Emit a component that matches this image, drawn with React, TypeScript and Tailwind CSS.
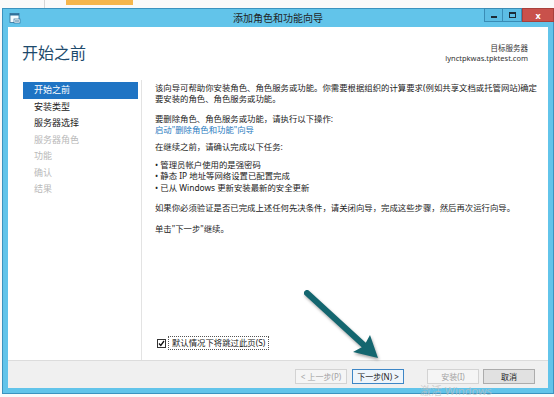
import React from "react";

const navItems = [
  { label: "开始之前", state: "active" },
  { label: "安装类型", state: "normal" },
  { label: "服务器选择", state: "normal" },
  { label: "服务器角色", state: "disabled" },
  { label: "功能", state: "disabled" },
  { label: "确认", state: "disabled" },
  { label: "结果", state: "disabled" },
];

function WindowIcon() {
  return (
    <svg width="12" height="12" viewBox="0 0 12 12">
      <rect x="1" y="1.5" width="9" height="9" fill="#f4fbff" stroke="#2f6f9a" strokeWidth="0.8" />
      <rect x="1" y="1.5" width="9" height="2" fill="#2f6f9a" />
      <rect x="5" y="7" width="6" height="4" fill="#ffffff" stroke="#2f6f9a" strokeWidth="0.7" />
      <rect x="6" y="8.5" width="4" height="1" fill="#2f6f9a" />
    </svg>
  );
}

function Arrow() {
  return (
    <svg
      className="absolute left-0 top-0 pointer-events-none"
      width="554"
      height="397"
      viewBox="0 0 554 397"
      style={{ filter: "drop-shadow(1px 2px 1.5px rgba(0,0,0,0.35))" }}
    >
      <path d="M307 293 L367 348" stroke="#14666f" strokeWidth="6" strokeLinecap="round" fill="none" />
      <path d="M378 358 L353 352 L364 346 L370 335 Z" fill="#14666f" />
    </svg>
  );
}

export default function App() {
  return (
    <div
      className="relative w-[554px] h-[397px] overflow-hidden bg-[#fafafa] text-[#1e1e1e]"
      style={{ fontFamily: "'Noto Sans', 'Noto Sans CJK SC', sans-serif" }}
    >
      {/* desktop strip behind the window */}
      <div className="flex h-[8px]">
        <div className="w-[45px] border-r border-[#d6d6d6]" />
        <div className="ml-[21px] w-[67px] h-[5px] bg-[#f6b64c]" />
      </div>

      {/* wizard window */}
      <div className="ml-[2px] w-[552px] border border-[#3b93bf] bg-[#62c4ea]">
        <div className="grid grid-cols-[1fr_auto_1fr] items-center h-[18px]">
          <div className="pl-[6px] flex items-center">
            <WindowIcon />
          </div>
          <div className="text-[10px] text-[#1f1f1f] leading-none">添加角色和功能向导</div>
          <div className="flex justify-end self-start -mt-px -mr-px">
            <div className="w-[19px] h-[14px] border border-[#3a8cb5] bg-[#5cbde4] flex items-end justify-center pb-[3px]">
              <div className="w-[6px] h-[2px] bg-[#1c2b36]" />
            </div>
            <div className="w-[19px] h-[14px] border-y border-r border-[#3a8cb5] bg-[#5cbde4] flex items-center justify-center">
              <div className="w-[7px] h-[6px] border-[1.5px] border-t-[2px] border-[#1c2b36]" />
            </div>
            <div className="w-[32px] h-[14px] bg-[#c9514b] border border-[#a8403b] flex items-center justify-center text-white text-[9px] font-bold leading-none">
              x
            </div>
          </div>
        </div>

        <div className="px-[5px] pb-[5px]">
          <div className="bg-white h-[361px] flex flex-col">
            {/* header */}
            <div className="h-[53px] flex justify-between pl-[14px] pr-[20px]">
              <div className="pt-[16px] text-[16px] leading-[20px] text-[#1d4a6c]">开始之前</div>
              <div className="pt-[16px] text-right text-[7.5px] leading-[10px] text-[#333]">
                <div>目标服务器</div>
                <div>lynctpkwas.tpktest.com</div>
              </div>
            </div>

            {/* body */}
            <div className="flex-1 flex">
              <div className="w-[134px] border-r border-[#e3e3e3] pt-[2px] pl-[15px] pr-[3px]">
                {navItems.map((item) => (
                  <div
                    key={item.label}
                    className={`h-[16.5px] leading-[16.5px] pl-[11px] text-[9px] ${
                      item.state === "active"
                        ? "bg-[#1f74c4] text-white"
                        : item.state === "normal"
                        ? "text-[#222]"
                        : "text-[#b9b9b9]"
                    }`}
                  >
                    {item.label}
                  </div>
                ))}
              </div>

              <div className="flex-1 flex flex-col pl-[13px] pt-[1.5px] text-[8.4px] leading-[11.5px] text-[#222]">
                <div className="whitespace-nowrap">
                  <div>该向导可帮助你安装角色、角色服务或功能。你需要根据组织的计算要求(例如共享文档或托管网站)确定</div>
                  <div>要安装的角色、角色服务或功能。</div>
                </div>
                <div className="mt-[8px]">
                  <div>要删除角色、角色服务或功能，请执行以下操作:</div>
                  <div className="text-[#2a7bc0]">启动"删除角色和功能"向导</div>
                </div>
                <div className="mt-[5.5px]">在继续之前，请确认完成以下任务:</div>
                <ul className="mt-[6px]">
                  <li>• 管理员帐户使用的是强密码</li>
                  <li>• 静态 IP 地址等网络设置已配置完成</li>
                  <li>• 已从 Windows 更新安装最新的安全更新</li>
                </ul>
                <div className="mt-[8.5px] whitespace-nowrap">
                  如果你必须验证是否已完成上述任何先决条件，请关闭向导，完成这些步骤，然后再次运行向导。
                </div>
                <div className="mt-[9.5px]">单击"下一步"继续。</div>

                <div className="mt-auto mb-[10px] flex items-center">
                  <div className="ml-[2px] w-[9px] h-[9px] border border-[#333] bg-white flex items-center justify-center">
                    <svg width="7" height="7" viewBox="0 0 7 7">
                      <path d="M1 3.5 L2.8 5.5 L6 1" stroke="#111" strokeWidth="1.3" fill="none" />
                    </svg>
                  </div>
                  <div className="ml-[2px] px-[3px] h-[14px] leading-[12px] border border-dotted border-[#555]">
                    默认情况下将跳过此页(S)
                  </div>
                </div>
              </div>
            </div>

            {/* footer */}
            <div className="h-[28px] border-t border-[#dcdcdc] bg-[#f0f0f0] flex items-start justify-end pt-[8px] pr-[13px] text-[8px]">
              <div className="w-[52px] h-[15px] border border-[#d3d3d3] bg-[#f5f5f5] text-[#a3a3a3] flex items-center justify-center">
                &lt; 上一步(P)
              </div>
              <div className="ml-[5px] w-[52px] h-[15px] border border-[#3d86c6] bg-[#eef5fb] text-[#1a1a1a] flex items-center justify-center">
                下一步(N) &gt;
              </div>
              <div className="ml-[23px] w-[52px] h-[15px] border border-[#d3d3d3] bg-[#f5f5f5] text-[#a3a3a3] flex items-center justify-center">
                安装(I)
              </div>
              <div className="ml-[4px] w-[52px] h-[15px] border border-[#acacac] bg-[#e1e1e1] text-[#1a1a1a] flex items-center justify-center">
                取消
              </div>
            </div>
          </div>
        </div>
      </div>

      <Arrow />

      {/* activation watermark */}
      <div className="absolute left-[420px] top-[385px] text-[11px] leading-[12px] text-[#bdbdbd]/70 pointer-events-none">
        激活 Windows
      </div>
    </div>
  );
}
